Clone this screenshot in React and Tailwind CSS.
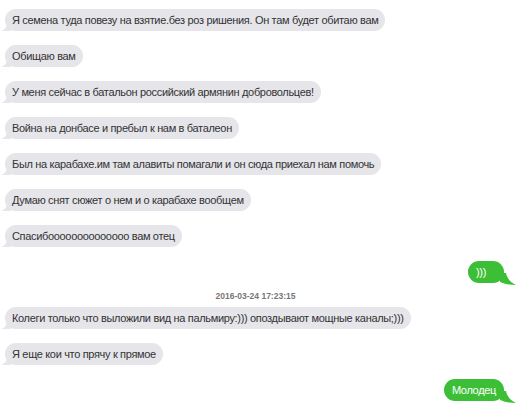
import React from "react";

const LeftTail = () => (
  <svg className="absolute left-[-4px] bottom-0" width="10" height="10" viewBox="0 0 10 10">
    <path d="M10 0 L10 10 L0 10 C4 9 6 6 6 0 Z" fill="#e5e5ea" />
  </svg>
);

const RightTail = () => (
  <svg className="absolute right-[-12px] bottom-[-2px]" width="16" height="12" viewBox="0 0 16 12">
    <path d="M0 0 L6 0 C7 5 10 9 16 12 C10 12 5 11 0 9 Z" fill="#3cbf37" />
  </svg>
);

function In({ children }) {
  return (
    <div className="flex pl-[5px]">
      <div className="relative rounded-[11px] bg-[#e5e5ea] px-[7px] h-[22px] flex items-center text-[11px] tracking-[-0.33px] text-[#333] leading-none whitespace-nowrap">
        <LeftTail />
        <span className="relative">{children}</span>
      </div>
    </div>
  );
}

function Out({ children, wide }) {
  return (
    <div className="flex justify-end pr-[15px]">
      <div className={wide ? "relative rounded-[11px] bg-[#3cbf37] pl-[8px] pr-[18px] h-[22px] flex items-center text-[11px] tracking-[-0.33px] text-white leading-none whitespace-nowrap" : "relative rounded-[11px] bg-[#3cbf37] px-[8px] h-[22px] flex items-center text-[11px] tracking-[-0.33px] text-white leading-none whitespace-nowrap"}>
        <RightTail />
        <span className="relative">{children}</span>
      </div>
    </div>
  );
}

export default function App() {
  return (
    <div className="w-[519px] h-[409px] bg-white overflow-hidden pt-[9px] flex flex-col gap-[14px]" style={{ fontFamily: '"Liberation Sans", Arial, sans-serif' }}>
      <In>Я семена туда повезу на взятие.без роз ришения. Он там будет обитаю вам</In>
      <In>Обищаю вам</In>
      <In>У меня сейчас в батальон российский армянин добровольцев!</In>
      <In>Война на донбасе и пребыл к нам в баталеон</In>
      <In>Был на карабахе.им там алавиты помагали и он сюда приехал нам помочь</In>
      <In>Думаю снят сюжет о нем и о карабахе вообщем</In>
      <In>Спасибоооооооооооооо вам отец</In>
      <Out wide>)))</Out>
      <div className="flex flex-col gap-[5px] -mt-[6px]">
        <div className="text-center text-[8.5px] font-bold text-[#777] leading-[11px] pr-[8px]">2016-03-24 17:23:15</div>
        <In>Колеги только что выложили вид на пальмиру:))) опоздывают мощные каналы;)))</In>
      </div>
      <In>Я еще кои что прячу к прямое</In>
      <Out>Молодец</Out>
    </div>
  );
}
